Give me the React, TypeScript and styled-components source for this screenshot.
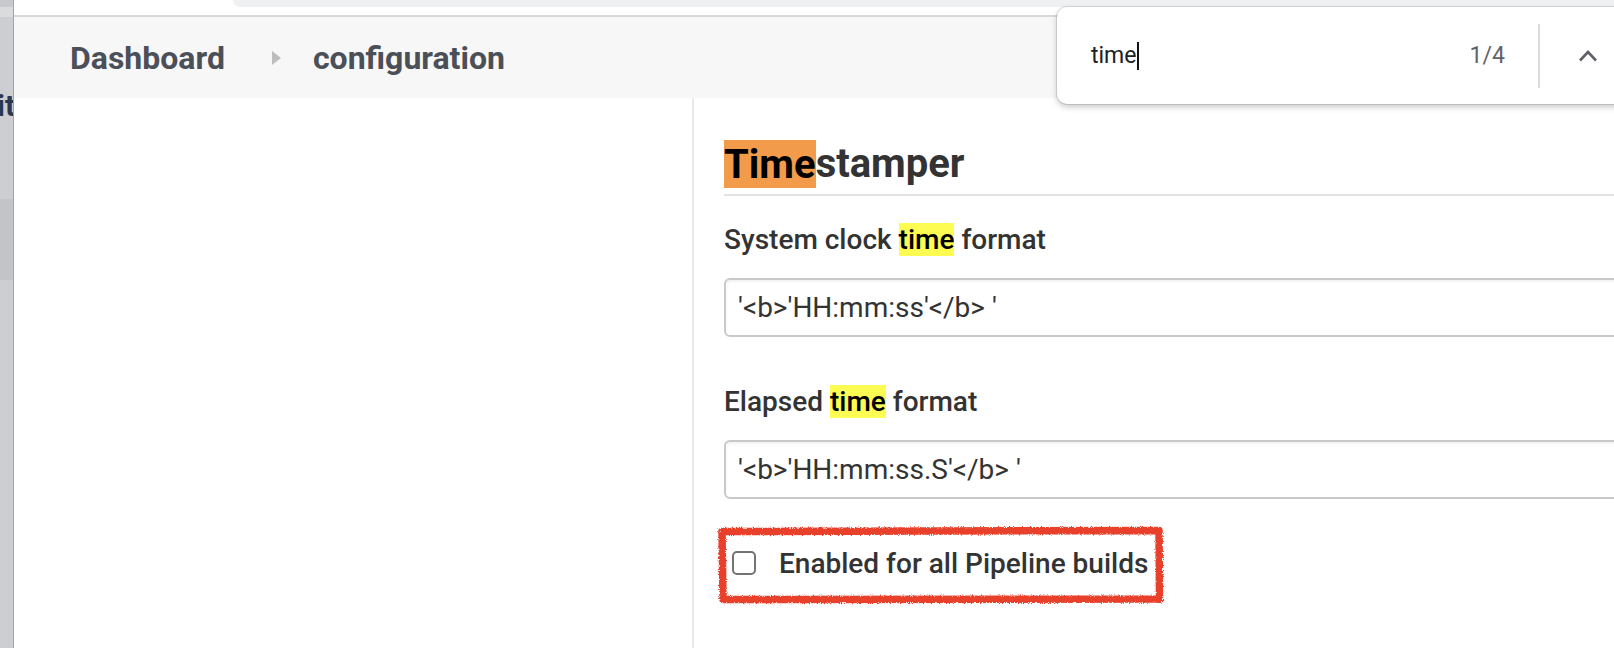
import React from 'react';
import styled, { createGlobalStyle } from 'styled-components';

const GlobalStyle = createGlobalStyle`
  html, body {
    margin: 0;
    padding: 0;
    background: #ffffff;
    font-family: Roboto, 'Liberation Sans', Arial, sans-serif;
  }
  #root {
    height: 100vh;
  }
`;

const Page = styled.div`
  display: flex;
  height: 648px;
  width: 1614px;
  overflow: hidden;
  position: relative;
`;

const BackStrip = styled.div`
  width: 13px;
  flex: none;
  border-right: 1px solid #a3a4a7;
  background: #cdced1;
  display: flex;
  flex-direction: column;
  overflow: hidden;
`;

const StripTop = styled.div`
  height: 7px;
  background: #c8c9cc;
  border-bottom: 10px solid #dadbdd;
`;

const StripLabel = styled.div`
  margin-top: 74px;
  margin-left: -3px;
  font-size: 30px;
  line-height: 30px;
  font-weight: 700;
  color: #2b3850;
  white-space: nowrap;
`;

const StripBlock = styled.div`
  margin-top: 78px;
  height: 81px;
  background: #c3c4c8;
`;

const Main = styled.div`
  flex: 1;
  display: flex;
  flex-direction: column;
  min-width: 0;
`;

const ChromeBar = styled.div`
  height: 15px;
  border-bottom: 2px solid #d8d9dd;
  background: #ffffff;
  display: flex;
`;

const ChromePill = styled.div`
  margin-left: 219px;
  flex: 1;
  height: 7px;
  background: #eff0f2;
  border-bottom-left-radius: 22px;
`;

const Breadcrumbs = styled.nav`
  height: 81px;
  background: #f7f7f7;
  display: flex;
  align-items: center;
  padding-left: 56px;
  font-size: 32px;
  font-weight: 700;
  color: #4a4f58;
`;

const Crumb = styled.span`
  line-height: 40px;
`;

const CrumbArrow = styled.span`
  width: 0;
  height: 0;
  margin: 0 32px 0 47px;
  border-top: 7.5px solid transparent;
  border-bottom: 7.5px solid transparent;
  border-left: 9px solid #bdbdbd;
`;

const Body = styled.div`
  flex: 1;
  display: flex;
  min-height: 0;
`;

const SidePanel = styled.aside`
  width: 678px;
  flex: none;
  border-right: 2px solid #e7eaee;
`;

const Content = styled.section`
  flex: 1;
  padding-left: 30px;
  padding-top: 42px;
  min-width: 0;
`;

const SectionTitle = styled.h2`
  margin: 0;
  font-size: 40px;
  line-height: 48px;
  font-weight: 700;
  color: #333333;
  padding-bottom: 6px;
  border-bottom: 2px solid #e3e3e3;
`;

const Hit = styled.mark<{ $active?: boolean }>`
  background: ${(p) => (p.$active ? '#f29b4b' : '#fcfc52')};
  color: #000000;
  padding: ${(p) => (p.$active ? '0.5px 0' : '0')};
`;

const FieldLabel = styled.div<{ $gap: number }>`
  margin-top: ${(p) => p.$gap}px;
  font-size: 28px;
  line-height: 32px;
  font-weight: 500;
  color: #333333;
`;

const TextField = styled.input`
  display: block;
  box-sizing: border-box;
  margin-top: 22px;
  width: calc(100% + 40px);
  height: 59px;
  padding: 0 12px;
  border: 2px solid #c9c9c9;
  border-radius: 6px;
  box-shadow: inset 0 2px 3px rgba(0, 0, 0, 0.05);
  font-family: Roboto, 'Liberation Sans', Arial, sans-serif;
  font-size: 28px;
  color: #333333;
  background: #ffffff;
  outline: none;
`;

const CheckRow = styled.label`
  position: relative;
  margin-top: 48px;
  display: flex;
  align-items: center;
  height: 32px;
  padding-left: 8px;
  font-size: 28px;
  font-weight: 500;
  color: #333333;
`;

const CheckBox = styled.span`
  width: 24px;
  height: 24px;
  box-sizing: border-box;
  border: 2px solid #737373;
  border-radius: 5px;
  background: #ffffff;
  margin-right: 23px;
`;

const Marker = styled.svg`
  position: absolute;
  left: -7px;
  top: -21px;
  pointer-events: none;
`;

const FindBar = styled.div`
  position: absolute;
  left: 1057px;
  top: 7px;
  width: 640px;
  height: 97px;
  box-sizing: border-box;
  background: #ffffff;
  border-radius: 10px;
  box-shadow: 0 0 0 1px rgba(0, 0, 0, 0.1), 0 3px 6px rgba(0, 0, 0, 0.22);
  display: flex;
  align-items: center;
  padding-left: 34px;
  font-family: Roboto, 'Liberation Sans', Arial, sans-serif;
  font-size: 23px;
`;

const FindQuery = styled.span`
  color: #202124;
  display: flex;
  align-items: center;
`;

const Caret = styled.span`
  width: 2px;
  height: 28px;
  background: #111111;
  margin-left: 1px;
`;

const FindCount = styled.span`
  margin-left: 330px;
  color: #5f6368;
  font-size: 23px;
`;

const FindDivider = styled.span`
  width: 2px;
  height: 64px;
  background: #dadce0;
  margin-left: 33px;
`;

const FindButton = styled.span`
  margin-left: 38px;
  display: flex;
`;

export default function App() {
  return (
    <>
      <GlobalStyle />
      <Page>
        <BackStrip>
          <StripTop />
          <StripLabel>it</StripLabel>
          <StripBlock />
        </BackStrip>
        <Main>
          <ChromeBar>
            <ChromePill />
          </ChromeBar>
          <Breadcrumbs>
            <Crumb>Dashboard</Crumb>
            <CrumbArrow />
            <Crumb>configuration</Crumb>
          </Breadcrumbs>
          <Body>
            <SidePanel />
            <Content>
              <SectionTitle>
                <Hit $active>Time</Hit>stamper
              </SectionTitle>
              <FieldLabel $gap={28}>
                System clock <Hit>time</Hit> format
              </FieldLabel>
              <TextField readOnly value={"'<b>'HH:mm:ss'</b> '"} />
              <FieldLabel $gap={49}>
                Elapsed <Hit>time</Hit> format
              </FieldLabel>
              <TextField readOnly value={"'<b>'HH:mm:ss.S'</b> '"} />
              <CheckRow>
                <CheckBox />
                Enabled for all Pipeline builds
                <Marker width="452" height="82" viewBox="0 0 452 82">
                  <defs>
                    <filter id="rough" x="-5%" y="-10%" width="110%" height="120%">
                      <feTurbulence type="fractalNoise" baseFrequency="0.9" numOctaves="2" seed="3" />
                      <feDisplacementMap in="SourceGraphic" scale="4" />
                    </filter>
                  </defs>
                  <path
                    d="M5 5.5 L442 4.5 L442.5 73 L6 73.5 Z"
                    fill="none"
                    stroke="#e8412a"
                    strokeWidth="7.5"
                    strokeLinejoin="round"
                    filter="url(#rough)"
                  />
                </Marker>
              </CheckRow>
            </Content>
          </Body>
        </Main>
        <FindBar>
          <FindQuery>
            time
            <Caret />
          </FindQuery>
          <FindCount>1/4</FindCount>
          <FindDivider />
          <FindButton>
            <svg width="20" height="13" viewBox="0 0 20 13">
              <path d="M2 11.5 L10 3 L18 11.5" fill="none" stroke="#5f6368" strokeWidth="2.6" />
            </svg>
          </FindButton>
        </FindBar>
      </Page>
    </>
  );
}
